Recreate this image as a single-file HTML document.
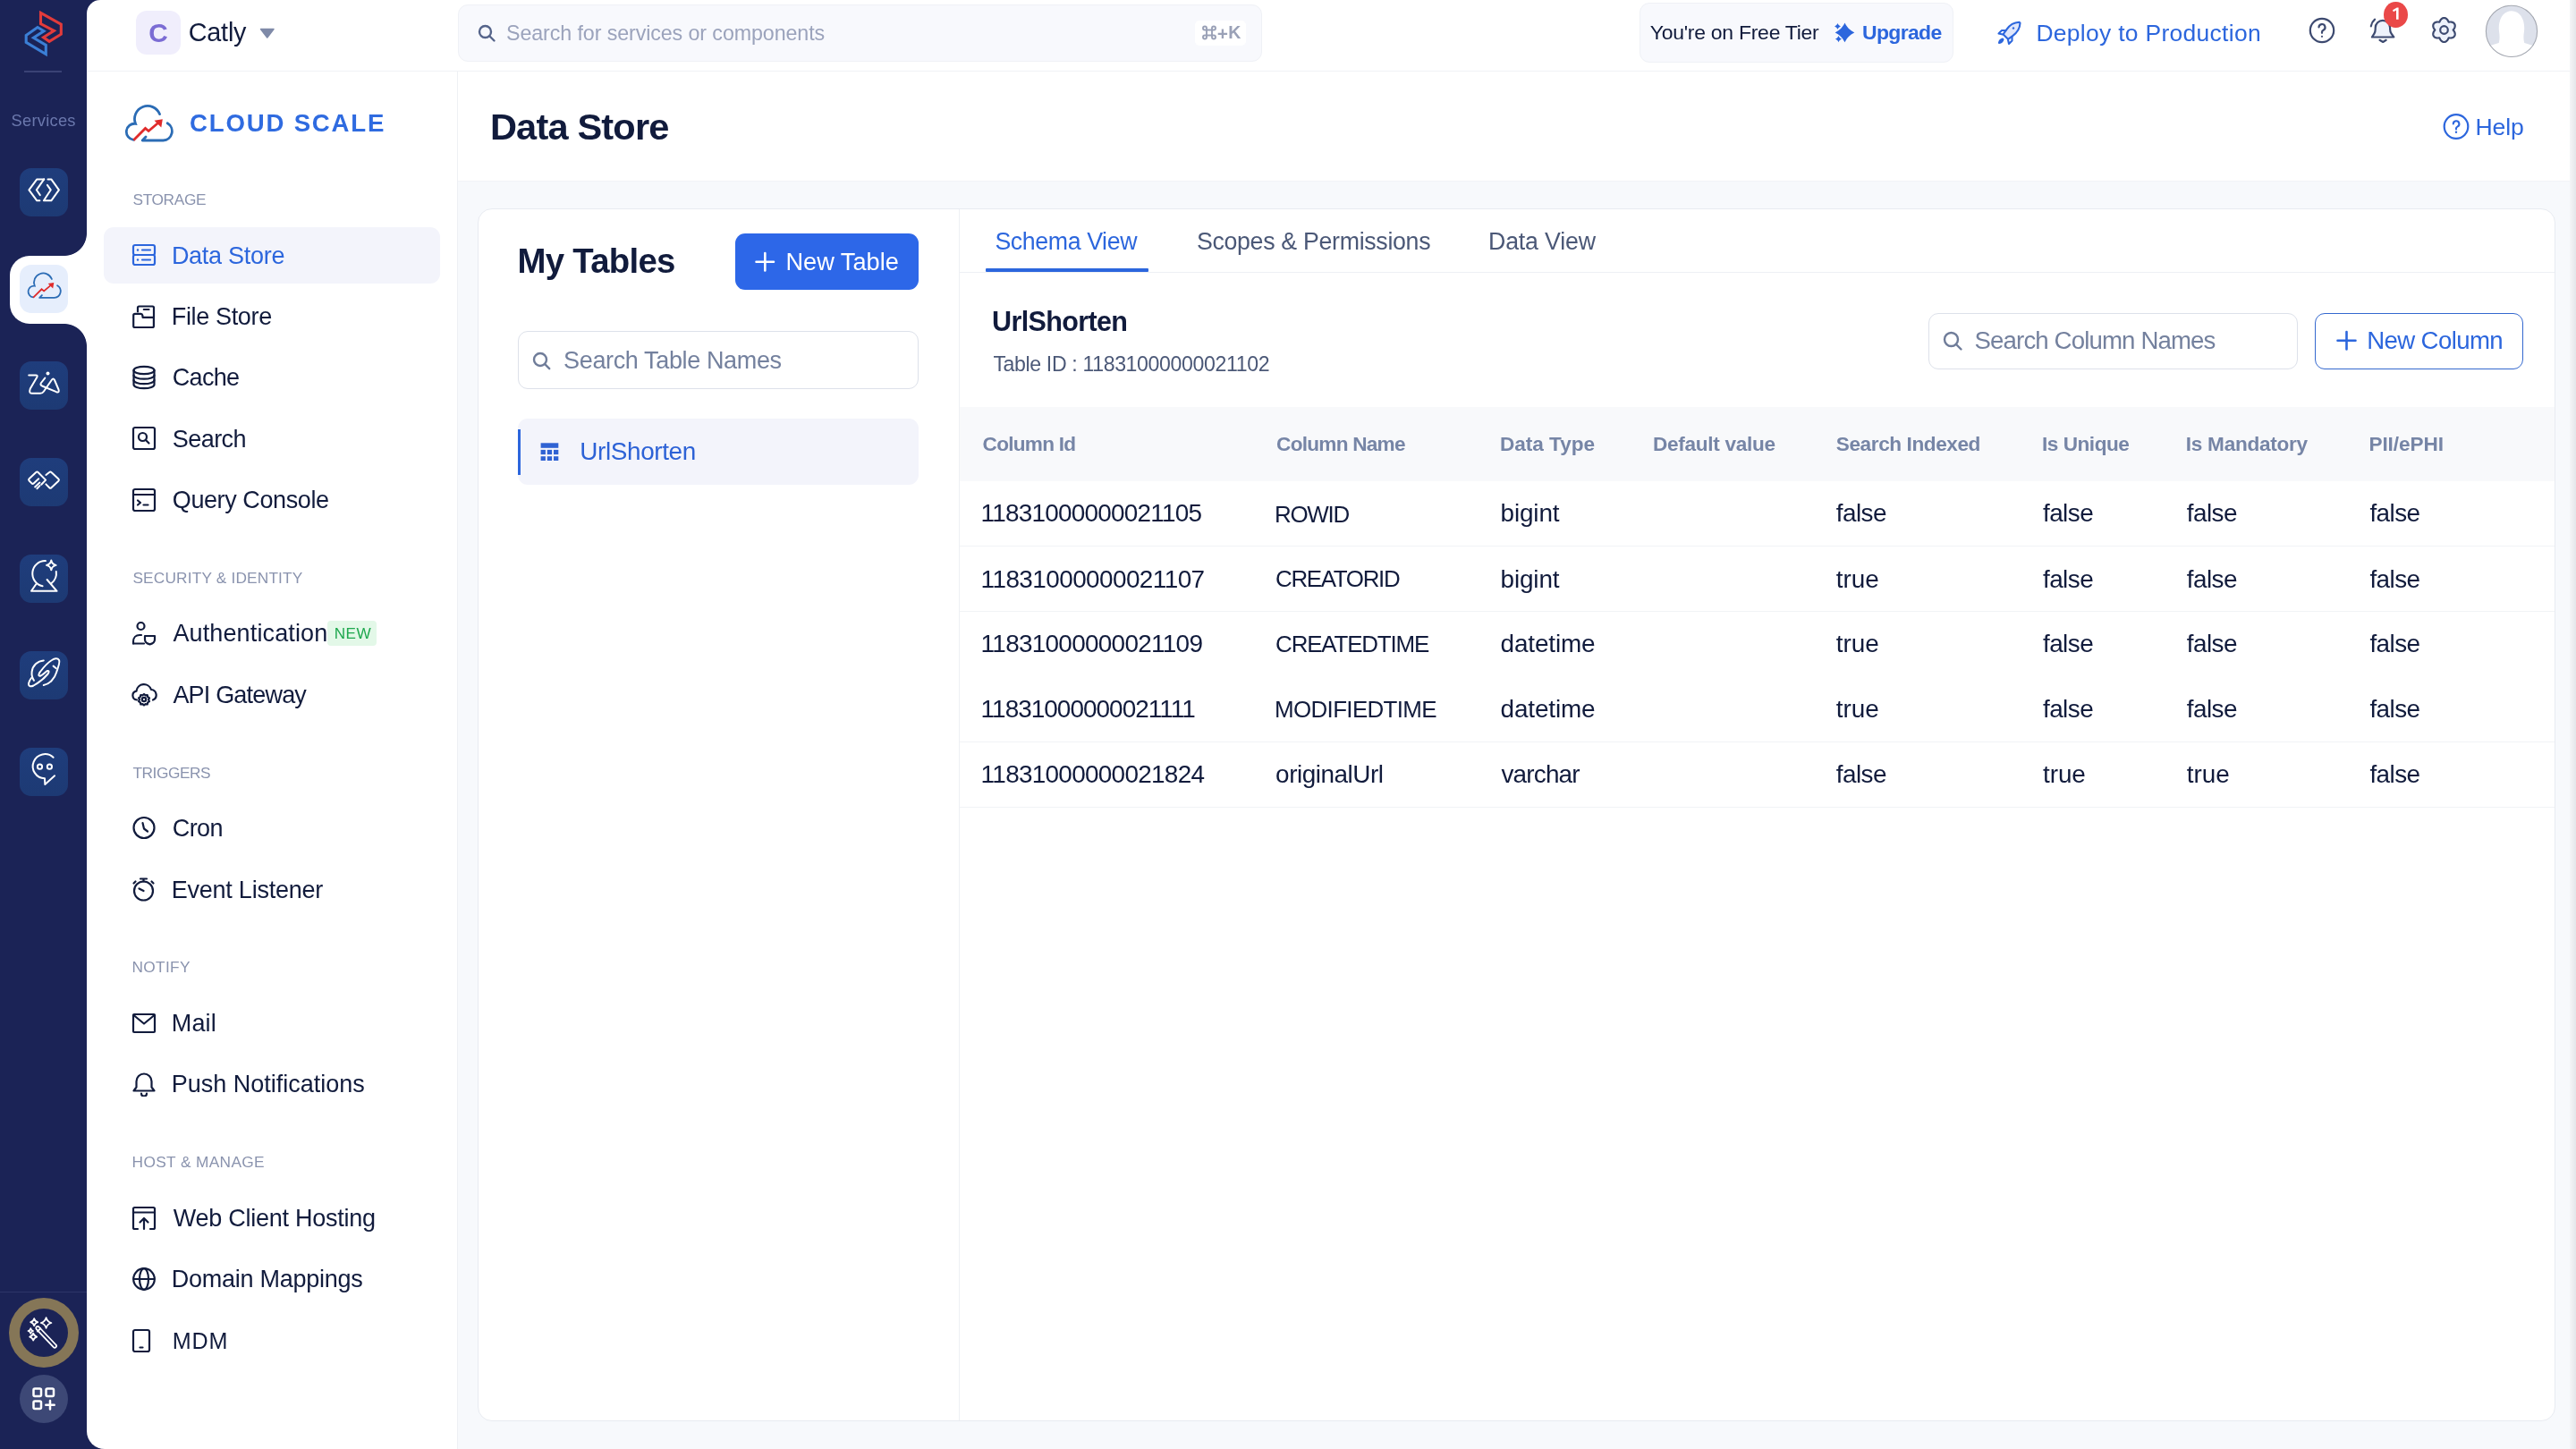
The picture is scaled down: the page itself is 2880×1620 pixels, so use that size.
<!DOCTYPE html><html><head><meta charset='utf-8'><style>
*{margin:0;padding:0;box-sizing:border-box}
html,body{width:2880px;height:1620px;overflow:hidden}
body{background:#1b2356;position:relative;font-family:"Liberation Sans",sans-serif}
.a{position:absolute}
.t{position:absolute;white-space:nowrap;font-family:"Liberation Sans",sans-serif}
@media (max-width:1600px){html{zoom:0.5}}
</style></head><body>
<div class='a' style='left:97px;top:0px;width:2783px;height:1620px;background:#fff;border-radius:15px 0 0 20px'></div>
<div class='a' style='left:11px;top:286px;width:120px;height:76px;background:#fff;border-radius:22px 0 0 22px'></div>
<div class='a' style='left:72px;top:261px;width:25px;height:25px;background:radial-gradient(circle at 0 0, #1b2356 24.5px, #fff 25.3px);'></div>
<div class='a' style='left:72px;top:362px;width:25px;height:25px;background:radial-gradient(circle at 0 100%, #1b2356 24.5px, #fff 25.3px);'></div>
<div class='a' style='left:97px;top:79px;width:2783px;height:1px;background:#f0f2f6'></div>
<div class='a' style='left:511px;top:80px;width:1px;height:1540px;background:#eef0f4'></div>
<div class='a' style='left:512px;top:203px;width:2368px;height:1417px;background:#f7f9fc'></div>
<div class='a' style='left:512px;top:202px;width:2368px;height:1px;background:#f2f4f7'></div>
<div class='a' style='left:2873px;top:0px;width:7px;height:1620px;background:linear-gradient(90deg,#f4f5f7,#e4e6ea)'></div>
<div class='a' style='left:534px;top:233px;width:2323px;height:1356px;background:#fff;border:1px solid #e8ebf1;border-radius:16px'></div>
<div class='a' style='left:1072px;top:234px;width:1px;height:1354px;background:#eef0f4'></div>
<div class='a' style='left:1073px;top:304px;width:1783px;height:1px;background:#eef0f4'></div>
<div class='a' style='left:1102.4px;top:300px;width:181.4px;height:4.2px;background:#2c66dd;border-radius:1px'></div>
<div class='a' style='left:1073px;top:455px;width:1783px;height:83px;background:#f8f9fb'></div>
<div class='a' style='left:1073px;top:610px;width:1783px;height:1px;background:#f1f3f6'></div>
<div class='a' style='left:1073px;top:683px;width:1783px;height:1px;background:#f1f3f6'></div>
<div class='a' style='left:1073px;top:829px;width:1783px;height:1px;background:#f1f3f6'></div>
<div class='a' style='left:1073px;top:901.5px;width:1783px;height:1px;background:#f1f3f6'></div>
<div class='a' style='left:27px;top:79px;width:42px;height:1.5px;background:#3a4275'></div>
<div class='a' style='left:0px;top:1444px;width:97px;height:1.2px;background:#2d3568'></div>
<div class='a' style='left:151.6px;top:11.6px;width:50.5px;height:49.7px;background:#f0eefc;border-radius:12px'></div>
<div class='a' style='left:512px;top:4.5px;width:899px;height:64px;background:#f8f9fd;border:1px solid #eff1f6;border-radius:11px'></div>
<div class='a' style='left:1336px;top:22.6px;width:57px;height:28.7px;background:#fff;border-radius:5px'></div>
<div class='a' style='left:1832.5px;top:3.4px;width:351px;height:67px;background:#f8f9fd;border:1px solid #eff1f6;border-radius:11px'></div>
<div class='a' style='left:116px;top:254px;width:376px;height:63px;background:#f3f4fb;border-radius:11px'></div>
<div class='a' style='left:365.8px;top:694.4px;width:55.7px;height:28px;background:#e3f8e8;border-radius:4px'></div>
<div class='a' style='left:821.8px;top:261.2px;width:205px;height:63.3px;background:#2d67e8;border-radius:11px'></div>
<div class='a' style='left:579.2px;top:370px;width:448px;height:64.8px;background:#fff;border:1.5px solid #dde1ea;border-radius:11px'></div>
<div class='a' style='left:579px;top:467.7px;width:448px;height:74.8px;background:#f3f4fb;border-radius:11px'></div>
<div class='a' style='left:579px;top:479.5px;width:3px;height:51px;background:#2c66dd'></div>
<div class='a' style='left:2156.3px;top:349.5px;width:413px;height:63.1px;background:#fff;border:1.5px solid #dde1ea;border-radius:11px'></div>
<div class='a' style='left:2588.4px;top:349.5px;width:232.3px;height:63.1px;background:#fff;border:1.6px solid #3468cf;border-radius:11px'></div>
<svg class='a' style='left:20px;top:8px;' width='56' height='60' viewBox='0 0 56 60' fill='none'><path d='M25.5 6.3L48.3 19.2V30.2L35.1 38.3 28.6 33.8 40.4 26.3 25.5 18.5z' stroke='#e23b3b' stroke-width='3.1' stroke-linejoin='miter' fill='none'/><path d='M22 22.5L29 26.8 17.5 34.3 31.3 42.5V52.5L9.2 39.3V31.5z' stroke='#3b7fd6' stroke-width='3.1' stroke-linejoin='miter' fill='none'/></svg>
<div class='a' style='left:22px;top:188px;width:54px;height:54px;background:linear-gradient(180deg,#1f3d7c,#1d3a74);border-radius:13px'></div>
<div class='a' style='left:22px;top:296px;width:54px;height:54px;background:#e6eefc;border-radius:13px'></div>
<div class='a' style='left:22px;top:404px;width:54px;height:54px;background:linear-gradient(180deg,#1f3d7c,#1d3a74);border-radius:13px'></div>
<div class='a' style='left:22px;top:512px;width:54px;height:54px;background:linear-gradient(180deg,#1f3d7c,#1d3a74);border-radius:13px'></div>
<div class='a' style='left:22px;top:620px;width:54px;height:54px;background:linear-gradient(180deg,#1f3d7c,#1d3a74);border-radius:13px'></div>
<div class='a' style='left:22px;top:728px;width:54px;height:54px;background:linear-gradient(180deg,#1f3d7c,#1d3a74);border-radius:13px'></div>
<div class='a' style='left:22px;top:836px;width:54px;height:54px;background:linear-gradient(180deg,#1f3d7c,#1d3a74);border-radius:13px'></div>
<svg class='a' style='left:22px;top:188px;' width='54' height='54' viewBox='0 0 54 54' fill='none'><path d='M27.2 12.4H19.3L10.4 24.3 19.3 36.3H22.4' stroke='#ffffff' stroke-width='2' stroke-linecap='round' stroke-linejoin='round' stroke-width='2.3' stroke-linecap='butt'/><path d='M27.2 12.4L18.8 24.3 22.8 30.1' stroke='#ffffff' stroke-width='2' stroke-linecap='round' stroke-linejoin='round' stroke-width='2.3' stroke-linecap='butt'/><path d='M31.5 12.4H35.3L43.9 24.3 35.3 36.3H26.9L34.8 24.3 30.9 18.8' stroke='#ffffff' stroke-width='2' stroke-linecap='round' stroke-linejoin='round' stroke-width='2.3' stroke-linecap='butt'/></svg>
<svg class='a' style='left:22px;top:296px;' width='54' height='54' viewBox='0 0 54 54' fill='none'><g transform='translate(9.3 9.9) scale(0.71)'><path d='M8.3 37.3A9 9 0 0 1 10.5 19.3A14.3 14.3 0 0 1 37.5 8.6' stroke='#2b6cb5' stroke-width='2.5' stroke-linecap='round' fill='none'/><path d='M46.2 18.8A10.3 10.3 0 0 1 41.5 38H18.2L22 34' stroke='#2b6cb5' stroke-width='2.5' stroke-linecap='round' stroke-linejoin='round' fill='none'/><path d='M8.3 37.7L21.5 24.5L25.1 27.5L36 18.3' stroke='#e02b2b' stroke-width='2.5' fill='none'/><path d='M31.5 15.8L40.8 14.2L39.3 23.5z' fill='#e02b2b'/></g></svg>
<svg class='a' style='left:22px;top:404px;' width='54' height='54' viewBox='0 0 54 54' fill='none'><path d='M10.2 15.5H18Q20.5 15.5 19.3 17.7L11.8 30.5Q10 35.8 13.5 35.8H23Q25.5 35.8 27 33.5L36 20.5Q37.5 18.3 38.8 20.5L43.5 31.5Q44.8 35.3 41 34.2L25 27.5Q22.5 26 24 24L28.3 18.6' stroke='#ffffff' stroke-width='2' stroke-linecap='round' stroke-linejoin='round' stroke-width='2.2'/><circle cx='31.5' cy='13.6' r='2' fill='#fff'/></svg>
<svg class='a' style='left:22px;top:512px;' width='54' height='54' viewBox='0 0 54 54' fill='none'><path d='M24.2 29.8L29.1 24.6L20.5 16Q19.4 14.9 18.3 16L10.6 23.3Q9.5 24.4 10.6 25.5L13.5 28.4Q14.6 29.3 15.6 28.4L21.2 23.3' stroke='#ffffff' stroke-width='2' stroke-linecap='round' stroke-linejoin='round' stroke-width='2.2'/><path d='M22.4 27.6L17.1 32.4M22.4 31.1L19.4 34.3' stroke='#ffffff' stroke-width='2' stroke-linecap='round' stroke-linejoin='round' stroke-width='2.2'/><path d='M29.4 19L33.2 16Q34.3 14.9 35.4 16L43.4 23.5Q44.5 24.6 43.4 25.7L35.4 33.2Q34.3 34.3 33.2 33.2L29.4 29.4' stroke='#ffffff' stroke-width='2' stroke-linecap='round' stroke-linejoin='round' stroke-width='2.2'/></svg>
<svg class='a' style='left:22px;top:620px;' width='54' height='54' viewBox='0 0 54 54' fill='none'><path d='M28.9 7.1A14.2 14.2 0 0 0 25.6 35.2' stroke='#ffffff' stroke-width='2' stroke-linecap='round' stroke-linejoin='round'/><path d='M40.8 19A14.2 14.2 0 0 1 35.6 32' stroke='#ffffff' stroke-width='2' stroke-linecap='round' stroke-linejoin='round'/><path d='M30.6 28L41.6 40.8H13L18.4 33' stroke='#ffffff' stroke-width='2' stroke-linecap='round' stroke-linejoin='round'/><path d='M35.3 6.5c.6 3.3 1.9 4.6 5.3 5.4-3.4.8-4.7 2.1-5.3 5.4-.6-3.3-1.9-4.6-5.3-5.4 3.4-.8 4.7-2.1 5.3-5.4z' stroke='#ffffff' stroke-width='2' stroke-linecap='round' stroke-linejoin='round' stroke-width='2.2'/></svg>
<svg class='a' style='left:22px;top:728px;' width='54' height='54' viewBox='0 0 54 54' fill='none'><path d='M26.8 38C33 37 39 31 41 24C42.5 19 45.5 13 44 10C42.5 7.5 39 8 36 10C31 13 26 19 23 23C20.5 26 21 28.5 23.5 27.5C26 26.5 29.5 22.5 31 22C33 21.5 33 23.5 31.5 25.5C27 31 20 36 15.5 38.5C12.5 40 10 39.5 10 37C10 35 11.5 32 13 30' stroke='#ffffff' stroke-width='2' stroke-linecap='round' stroke-linejoin='round' stroke-width='2.1'/><path d='M26.8 10.4C20 11 14.5 16 13.6 23C13.2 27 14 30 16 32.8' stroke='#ffffff' stroke-width='2' stroke-linecap='round' stroke-linejoin='round' stroke-width='2.1'/><path d='M37.6 16.6L40.8 19.2' stroke='#ffffff' stroke-width='2' stroke-linecap='round' stroke-linejoin='round' stroke-width='2.1'/></svg>
<svg class='a' style='left:22px;top:836px;' width='54' height='54' viewBox='0 0 54 54' fill='none'><path d='M37.6 10.8A13.6 13.6 0 1 0 28 34.3L28.3 41L39.1 31.3' stroke='#ffffff' stroke-width='2' stroke-linecap='round' stroke-linejoin='round' stroke-width='2.2' stroke-linejoin='miter'/><circle cx='22.5' cy='21.2' r='2.6' stroke='#ffffff' stroke-width='2' stroke-linecap='round' stroke-linejoin='round' stroke-width='2'/><circle cx='33.4' cy='21.2' r='2.6' stroke='#ffffff' stroke-width='2' stroke-linecap='round' stroke-linejoin='round' stroke-width='2'/></svg>
<svg class='a' style='left:138px;top:116px;' width='56' height='46' viewBox='0 0 56 46' fill='none'><g transform='translate(3 3) scale(1.0)'><path d='M8.3 37.3A9 9 0 0 1 10.5 19.3A14.3 14.3 0 0 1 37.5 8.6' stroke='#2b6cb5' stroke-width='2.8' stroke-linecap='round' fill='none'/><path d='M46.2 18.8A10.3 10.3 0 0 1 41.5 38H18.2L22 34' stroke='#2b6cb5' stroke-width='2.8' stroke-linecap='round' stroke-linejoin='round' fill='none'/><path d='M8.3 37.7L21.5 24.5L25.1 27.5L36 18.3' stroke='#e02b2b' stroke-width='2.8' fill='none'/><path d='M31.5 15.8L40.8 14.2L39.3 23.5z' fill='#e02b2b'/></g></svg>
<svg class='a' style='left:147px;top:272px;' width='28' height='27' viewBox='0 0 28 27' fill='none'><rect x='2' y='2' width='24' height='11' rx='2' stroke='#2c66dd' stroke-width='2.2' stroke-linecap='round' stroke-linejoin='round'/><rect x='2' y='13' width='24' height='11' rx='2' stroke='#2c66dd' stroke-width='2.2' stroke-linecap='round' stroke-linejoin='round'/><circle cx='7' cy='7.5' r='1.2' fill='#2c66dd'/><circle cx='7' cy='18.5' r='1.2' fill='#2c66dd'/><path d='M12 7.5H21M12 18.5H21' stroke='#2c66dd' stroke-width='2.2' stroke-linecap='round' stroke-linejoin='round'/></svg>
<svg class='a' style='left:147px;top:341px;' width='28' height='27' viewBox='0 0 28 27' fill='none'><path d='M7 7.5V3Q7 1.5 8.5 1.5H23.5Q25 1.5 25 3V13.5M13.8 5H19.5' stroke='#111b3c' stroke-width='2.2' stroke-linecap='round' stroke-linejoin='round'/><path d='M2.2 11.5Q2.2 9.8 4 9.8H10.5Q12 9.8 12.3 11.5L12.6 13.8H24.9V23.5Q24.9 25 23.4 25H3.7Q2.2 25 2.2 23.5Z' stroke='#111b3c' stroke-width='2.2' stroke-linecap='round' stroke-linejoin='round'/></svg>
<svg class='a' style='left:147px;top:408px;' width='28' height='28' viewBox='0 0 28 28' fill='none'><ellipse cx='14' cy='6' rx='11.5' ry='4.2' stroke='#111b3c' stroke-width='2.2' stroke-linecap='round' stroke-linejoin='round'/><path d='M2.5 6v16c0 2.3 5.1 4.2 11.5 4.2s11.5-1.9 11.5-4.2V6' stroke='#111b3c' stroke-width='2.2' stroke-linecap='round' stroke-linejoin='round'/><path d='M2.5 11.5c0 2.3 5.1 4.2 11.5 4.2s11.5-1.9 11.5-4.2M2.5 17c0 2.3 5.1 4.2 11.5 4.2s11.5-1.9 11.5-4.2' stroke='#111b3c' stroke-width='2.2' stroke-linecap='round' stroke-linejoin='round'/></svg>
<svg class='a' style='left:147px;top:476px;' width='28' height='28' viewBox='0 0 28 28' fill='none'><rect x='2' y='2' width='24' height='24' rx='2' stroke='#111b3c' stroke-width='2.2' stroke-linecap='round' stroke-linejoin='round'/><circle cx='12.5' cy='12.5' r='4.5' stroke='#111b3c' stroke-width='2.2' stroke-linecap='round' stroke-linejoin='round'/><path d='M16 16l3.5 3.5' stroke='#111b3c' stroke-width='2.2' stroke-linecap='round' stroke-linejoin='round'/></svg>
<svg class='a' style='left:147px;top:545px;' width='28' height='28' viewBox='0 0 28 28' fill='none'><rect x='2' y='2' width='24' height='24' rx='2' stroke='#111b3c' stroke-width='2.2' stroke-linecap='round' stroke-linejoin='round'/><path d='M2 8h24' stroke='#111b3c' stroke-width='2.2' stroke-linecap='round' stroke-linejoin='round'/><path d='M7 14.5l3 2.5-3 2.5M13.5 19.5h5' stroke='#111b3c' stroke-width='2.2' stroke-linecap='round' stroke-linejoin='round'/></svg>
<svg class='a' style='left:147px;top:694px;' width='29' height='28' viewBox='0 0 29 28' fill='none'><circle cx='10.5' cy='6' r='4' stroke='#111b3c' stroke-width='2.2' stroke-linecap='round' stroke-linejoin='round'/><path d='M2 25.5v-2c0-4.5 3-7.5 7-7.5h2' stroke='#111b3c' stroke-width='2.2' stroke-linecap='round' stroke-linejoin='round'/><path d='M2 25.5h12' stroke='#111b3c' stroke-width='2.2' stroke-linecap='round' stroke-linejoin='round'/><path d='M15 17h11v4c0 2.8-2.4 4.6-5.5 5.4-3.1-.8-5.5-2.6-5.5-5.4z' stroke='#111b3c' stroke-width='2.2' stroke-linecap='round' stroke-linejoin='round'/></svg>
<svg class='a' style='left:147px;top:763px;' width='29' height='28' viewBox='0 0 29 28' fill='none'><path d='M6 19.5a5 5 0 0 1-0.5-9.9A8.5 8.5 0 0 1 22 8a6 6 0 0 1 2 11.5' stroke='#111b3c' stroke-width='2.2' stroke-linecap='round' stroke-linejoin='round'/><circle cx='14' cy='19' r='2.2' stroke='#111b3c' stroke-width='2.2' stroke-linecap='round' stroke-linejoin='round'/><path d='M14 13l1.6 1.4 2.1-.3.5 2.1 1.8 1.2-1 1.9 1 1.9-1.8 1.2-.5 2.1-2.1-.3L14 25.5l-1.6-1.4-2.1.3-.5-2.1-1.8-1.2 1-1.9-1-1.9 1.8-1.2.5-2.1 2.1.3z' stroke='#111b3c' stroke-width='2.2' stroke-linecap='round' stroke-linejoin='round'/></svg>
<svg class='a' style='left:147px;top:912px;' width='28' height='27' viewBox='0 0 28 27' fill='none'><circle cx='14' cy='13.5' r='11.5' stroke='#111b3c' stroke-width='2.2' stroke-linecap='round' stroke-linejoin='round'/><path d='M12.5 8l1.5 6.5 4 3' stroke='#111b3c' stroke-width='2.2' stroke-linecap='round' stroke-linejoin='round'/></svg>
<svg class='a' style='left:147px;top:980px;' width='28' height='29' viewBox='0 0 28 29' fill='none'><circle cx='13.5' cy='16' r='10.5' stroke='#111b3c' stroke-width='2.2' stroke-linecap='round' stroke-linejoin='round'/><path d='M10 2.5h7M13.5 2.5v3' stroke='#111b3c' stroke-width='2.2' stroke-linecap='round' stroke-linejoin='round'/><path d='M2.5 7.5l2-2M24.5 7.5l-2-2' stroke='#111b3c' stroke-width='2.2' stroke-linecap='round' stroke-linejoin='round'/><path d='M13.5 16l-5-2.5' stroke='#111b3c' stroke-width='2.2' stroke-linecap='round' stroke-linejoin='round'/></svg>
<svg class='a' style='left:147px;top:1132px;' width='28' height='24' viewBox='0 0 28 24' fill='none'><rect x='2' y='2' width='24' height='20' rx='1' stroke='#111b3c' stroke-width='2.2' stroke-linecap='round' stroke-linejoin='round'/><path d='M2.5 3l11.5 9.5L25.5 3' stroke='#111b3c' stroke-width='2.2' stroke-linecap='round' stroke-linejoin='round'/></svg>
<svg class='a' style='left:147px;top:1198px;' width='28' height='28' viewBox='0 0 28 28' fill='none'><path d='M2.5 21.5h23l-3-4V11a8.5 8.5 0 0 0-17 0v6.5z' stroke='#111b3c' stroke-width='2.2' stroke-linecap='round' stroke-linejoin='round'/><path d='M11 24.5a3 3 0 0 0 6 0' stroke='#111b3c' stroke-width='2.2' stroke-linecap='round' stroke-linejoin='round'/></svg>
<svg class='a' style='left:147px;top:1348px;' width='28' height='28' viewBox='0 0 28 28' fill='none'><path d='M7 26H3.5a1.5 1.5 0 0 1-1.5-1.5v-21A1.5 1.5 0 0 1 3.5 2h21A1.5 1.5 0 0 1 26 3.5v21a1.5 1.5 0 0 1-1.5 1.5H21' stroke='#111b3c' stroke-width='2.2' stroke-linecap='round' stroke-linejoin='round'/><path d='M2 7.5h24' stroke='#111b3c' stroke-width='2.2' stroke-linecap='round' stroke-linejoin='round'/><path d='M14 26V14.5M9.5 18.5l4.5-4.5 4.5 4.5' stroke='#111b3c' stroke-width='2.2' stroke-linecap='round' stroke-linejoin='round'/></svg>
<svg class='a' style='left:147px;top:1416px;' width='28' height='28' viewBox='0 0 28 28' fill='none'><circle cx='14' cy='14' r='11.8' stroke='#111b3c' stroke-width='2.2' stroke-linecap='round' stroke-linejoin='round'/><ellipse cx='14' cy='14' rx='5' ry='11.8' stroke='#111b3c' stroke-width='2.2' stroke-linecap='round' stroke-linejoin='round'/><path d='M2.5 14h23' stroke='#111b3c' stroke-width='2.2' stroke-linecap='round' stroke-linejoin='round'/></svg>
<svg class='a' style='left:147px;top:1485px;' width='23' height='28' viewBox='0 0 23 28' fill='none'><rect x='2' y='2' width='18' height='24' rx='2' stroke='#111b3c' stroke-width='2.2' stroke-linecap='round' stroke-linejoin='round'/><path d='M9.5 21.5h3' stroke='#111b3c' stroke-width='2.2' stroke-linecap='round' stroke-linejoin='round'/></svg>
<svg class='a' style='left:533px;top:26px;' width='22' height='22' viewBox='0 0 22 22' fill='none'><circle cx='9.5' cy='9.5' r='6.5' stroke='#55648a' stroke-width='2.4'/><path d='M14.5 14.5l5 5' stroke='#55648a' stroke-width='2.4' stroke-linecap='round'/></svg>
<svg class='a' style='left:289px;top:30px;' width='20' height='14' viewBox='0 0 20 14' fill='none'><path d='M2.5 2.5h14.5l-7.25 9.5z' fill='#7f8aa8' stroke='#7f8aa8' stroke-width='1.5' stroke-linejoin='round'/></svg>
<svg class='a' style='left:1343px;top:27px;' width='18' height='18' viewBox='0 0 18 18' fill='none'><path d='M6 6.5h6v6H6zM6 6.5V4.5a2 2 0 1 0-2 2h2M12 6.5V4.5a2 2 0 1 1 2 2h-2M6 12.5v2a2 2 0 1 1-2-2h2M12 12.5v2a2 2 0 1 0 2-2h-2' stroke='#9aa1b7' stroke-width='1.9'/></svg>
<svg class='a' style='left:1360px;top:31px;' width='14' height='14' viewBox='0 0 14 14' fill='none'><path d='M6.9 1.5v10.5M1.7 6.8h10.4' stroke='#9aa1b7' stroke-width='2.3'/></svg>
<svg class='a' style='left:2050px;top:24px;' width='26' height='26' viewBox='0 0 26 26' fill='none'><path d='M12.5 1.5999999999999996C15.2216 6.9568 17.9432 9.6784 23.3 12.4C17.9432 15.1216 15.2216 17.8432 12.5 23.200000000000003C9.7784 17.8432 7.0568 15.1216 1.6999999999999993 12.4C7.0568 9.6784 9.7784 6.9568 12.5 1.5999999999999996z' fill='#2c66dd'/><path d='M4.5 2.0000000000000004C5.316 3.7680000000000002 6.132 4.5840000000000005 7.9 5.4C6.132 6.216 5.316 7.032 4.5 8.8C3.684 7.032 2.868 6.216 1.1 5.4C2.868 4.5840000000000005 3.684 3.7680000000000002 4.5 2.0000000000000004z' fill='#2c66dd'/><path d='M5.5 16.0C6.364 17.872 7.228 18.736 9.1 19.6C7.228 20.464000000000002 6.364 21.328000000000003 5.5 23.200000000000003C4.636 21.328000000000003 3.772 20.464000000000002 1.9 19.6C3.772 18.736 4.636 17.872 5.5 16.0z' fill='#2c66dd'/></svg>
<svg class='a' style='left:2232px;top:23px;' width='29' height='28' viewBox='0 0 29 28' fill='none'><path d='M25.5 1.8c-6 .3-10.5 3-14 8l-4 5.5 5.5 5.5 5.5-4c5-3.5 7.7-8 8-14z' fill='#dfe6fb' stroke='#2c66dd' stroke-width='2.1' stroke-linecap='round' stroke-linejoin='round'/><path d='M10.5 11H6l-3.5 3.5 4.5 1M17.5 18v4.5l-3.5 3.5-1-4.5' stroke='#2c66dd' stroke-width='2.1' stroke-linecap='round' stroke-linejoin='round'/><path d='M7 20.5c-2 .5-3.5 2-4 4.5 2.5-.5 4-2 4.5-4' stroke='#2c66dd' stroke-width='2.1' stroke-linecap='round' stroke-linejoin='round'/><circle cx='19' cy='8.5' r='1.2' fill='#2c66dd'/></svg>
<svg class='a' style='left:2580px;top:18px;' width='32' height='32' viewBox='0 0 32 32' fill='none'><circle cx='16' cy='16' r='13.2' stroke='#3d4a70' stroke-width='2.2' stroke-linecap='round' stroke-linejoin='round'/><path d='M12.5 12.5a3.5 3.5 0 1 1 5 3.2c-1 .5-1.5 1.3-1.5 2.3v.8' stroke='#3d4a70' stroke-width='2.2' stroke-linecap='round' stroke-linejoin='round'/><circle cx='16' cy='22.8' r='1.1' fill='#3d4a70'/></svg>
<svg class='a' style='left:2649px;top:19px;' width='30' height='30' viewBox='0 0 30 30' fill='none'><path d='M2.9 22.5H27.3L24.6 18.6Q23.1 16.5 23.1 13.6V12A8.2 8.2 0 0 0 6.7 12V13.6Q6.7 16.5 5.4 18.6Z' fill='#eef2fb' stroke='#3d4a70' stroke-width='2.2' stroke-linecap='round' stroke-linejoin='round'/><path d='M11.5 25.8L15.2 28L18.7 25.8' stroke='#3d4a70' stroke-width='2.2' stroke-linecap='round' stroke-linejoin='round'/><path d='M1.8 10.3Q2.8 5.5 6.1 2.7' stroke='#3d4a70' stroke-width='2.2' stroke-linecap='round' stroke-linejoin='round'/></svg>
<div class='a' style='left:2665.1px;top:2.3px;width:26.7px;height:28.3px;background:#ea4848;border-radius:50%'></div>
<svg class='a' style='left:2672px;top:6px;' width='12' height='18' viewBox='0 0 12 18' fill='none'><path d='M3 5.2L7.8 2.4H9.6V15.7H7V5.5L3.9 7.3z' fill='#fff'/></svg>
<svg class='a' style='left:2717px;top:17.6px;' width='31' height='31' viewBox='0 0 31 31' fill='none'><path d='M25.70 15.50 L26.11 14.94 L26.55 14.34 L26.94 13.69 L27.28 13.00 L27.53 12.28 L27.69 11.54 L27.74 10.80 L27.67 10.08 L27.49 9.39 L27.19 8.75 L26.78 8.17 L26.28 7.67 L25.69 7.25 L25.02 6.93 L24.31 6.69 L23.56 6.55 L22.79 6.50 L22.03 6.51 L21.29 6.59 L20.60 6.67 L20.33 6.03 L20.02 5.35 L19.65 4.69 L19.22 4.05 L18.72 3.47 L18.16 2.97 L17.55 2.55 L16.89 2.25 L16.20 2.06 L15.50 2.00 L14.80 2.06 L14.11 2.25 L13.45 2.55 L12.84 2.97 L12.28 3.47 L11.78 4.05 L11.35 4.69 L10.98 5.35 L10.67 6.03 L10.40 6.67 L9.71 6.59 L8.97 6.51 L8.21 6.50 L7.44 6.55 L6.69 6.69 L5.98 6.93 L5.31 7.25 L4.72 7.67 L4.22 8.17 L3.81 8.75 L3.51 9.39 L3.33 10.08 L3.26 10.80 L3.31 11.54 L3.47 12.28 L3.72 13.00 L4.06 13.69 L4.45 14.34 L4.89 14.94 L5.30 15.50 L4.89 16.06 L4.45 16.66 L4.06 17.31 L3.72 18.00 L3.47 18.72 L3.31 19.46 L3.26 20.20 L3.33 20.92 L3.51 21.61 L3.81 22.25 L4.22 22.83 L4.72 23.33 L5.31 23.75 L5.98 24.07 L6.69 24.31 L7.44 24.45 L8.21 24.50 L8.97 24.49 L9.71 24.41 L10.40 24.33 L10.67 24.97 L10.98 25.65 L11.35 26.31 L11.78 26.95 L12.28 27.53 L12.84 28.03 L13.45 28.45 L14.11 28.75 L14.80 28.94 L15.50 29.00 L16.20 28.94 L16.89 28.75 L17.55 28.45 L18.16 28.03 L18.72 27.53 L19.22 26.95 L19.65 26.31 L20.02 25.65 L20.33 24.97 L20.60 24.33 L21.29 24.41 L22.03 24.49 L22.79 24.50 L23.56 24.45 L24.31 24.31 L25.02 24.07 L25.69 23.75 L26.28 23.33 L26.78 22.83 L27.19 22.25 L27.49 21.61 L27.67 20.92 L27.74 20.20 L27.69 19.46 L27.53 18.72 L27.28 18.00 L26.94 17.31 L26.55 16.66 L26.11 16.06z' fill='#eef2fb' stroke='#3d4a70' stroke-width='2.2' stroke-linecap='round' stroke-linejoin='round'/><circle cx='15.5' cy='15.5' r='4.3' stroke='#3d4a70' stroke-width='2.2' stroke-linecap='round' stroke-linejoin='round'/></svg>
<svg class='a' style='left:2778px;top:5px;' width='60' height='60' viewBox='0 0 60 60' fill='none'><defs><clipPath id='av'><circle cx='30' cy='29.9' r='28.6'/></clipPath></defs><circle cx='30' cy='29.9' r='28.6' fill='#dde1eb'/><g clip-path='url(#av)'><path d='M15.7 43C16.5 40 17 37 16 30C14.5 18 20 7.2 30 7.2C40 7.2 45.5 18 44 30C43 37 43.5 40 44.3 43C50 45 55 46 58 48L58 62L2 62L2 48C5 46 10 45 15.7 43Z' fill='#fff'/></g><circle cx='30' cy='29.9' r='28.6' stroke='#a3a7b0' stroke-width='1.1'/></svg>
<svg class='a' style='left:594px;top:392px;' width='24' height='24' viewBox='0 0 24 24' fill='none'><circle cx='10' cy='10' r='7' stroke='#6f7c99' stroke-width='2.4' stroke-linecap='round'/><path d='M15.2 15.2l5 5' stroke='#6f7c99' stroke-width='2.4' stroke-linecap='round'/></svg>
<svg class='a' style='left:2171px;top:369px;' width='25' height='25' viewBox='0 0 25 25' fill='none'><circle cx='10.5' cy='10.5' r='7.5' stroke='#6f7c99' stroke-width='2.4' stroke-linecap='round'/><path d='M16 16l5.5 5.5' stroke='#6f7c99' stroke-width='2.4' stroke-linecap='round'/></svg>
<svg class='a' style='left:843px;top:280px;' width='25' height='25' viewBox='0 0 25 25' fill='none'><path d='M12.3 3v19.5M2.5 12.8H22' stroke='#fff' stroke-width='2.6' stroke-linecap='round'/></svg>
<svg class='a' style='left:2611px;top:368px;' width='25' height='25' viewBox='0 0 25 25' fill='none'><path d='M12.5 3v19.5M2.5 12.8H22.5' stroke='#2c66dd' stroke-width='2.6' stroke-linecap='round'/></svg>
<svg class='a' style='left:603.5px;top:495px;' width='21' height='21' viewBox='0 0 21 21' fill='none'><rect x='0.6' y='0.3' width='19.7' height='5.5' fill='#2f62d3'/><rect x='0.6' y='7.9' width='5.3' height='5.2' fill='#2f62d3'/><rect x='7.8' y='7.9' width='5.3' height='5.2' fill='#2f62d3'/><rect x='15.0' y='7.9' width='5.3' height='5.2' fill='#2f62d3'/><rect x='0.6' y='15.2' width='5.3' height='4.8' fill='#2f62d3'/><rect x='7.8' y='15.2' width='5.3' height='4.8' fill='#2f62d3'/><rect x='15.0' y='15.2' width='5.3' height='4.8' fill='#2f62d3'/></svg>
<svg class='a' style='left:2730px;top:126px;' width='32' height='32' viewBox='0 0 32 32' fill='none'><circle cx='16' cy='15.5' r='13.3' stroke='#2c66dd' stroke-width='2.2'/><path d='M12.8 12.5a3.3 3.3 0 1 1 4.6 3.1c-.9.4-1.4 1.1-1.4 2v.8' stroke='#2c66dd' stroke-width='2.1' stroke-linecap='round'/><circle cx='16' cy='21.8' r='1.2' fill='#2c66dd'/></svg>
<div class='a' style='left:10px;top:1451px;width:78px;height:78px;border-radius:50%;background:#857657'></div>
<div class='a' style='left:22px;top:1463px;width:54px;height:54px;border-radius:50%;background:#1b2356'></div>
<svg class='a' style='left:22px;top:1463px;' width='54' height='54' viewBox='0 0 54 54' fill='none'><path d='M21.5 20.5L40.5 40.5A1.9 1.9 0 0 1 37.8 43.2L18.8 23.2A1.9 1.9 0 0 1 21.5 20.5z' stroke='#fff' stroke-width='1.8' stroke-linecap='round' stroke-linejoin='round' stroke-width='1.7'/><path d='M20 25.5l3.3-3.3' stroke='#fff' stroke-width='1.8' stroke-linecap='round' stroke-linejoin='round' stroke-width='1.5'/><path d='M29.6 10.2Q30.88 14.72 35.4 16Q30.88 17.28 29.6 21.8Q28.32 17.28 23.8 16Q28.32 14.72 29.6 10.2zM16.2 11.2Q17.08 14.32 20.2 15.2Q17.08 16.08 16.2 19.2Q15.32 16.08 12.2 15.2Q15.32 14.32 16.2 11.2zM15.2 27.6Q16.08 30.72 19.2 31.6Q16.08 32.48 15.2 35.6Q14.32 32.48 11.2 31.6Q14.32 30.72 15.2 27.6zM12.3 22.2Q12.92 24.38 15.100000000000001 25Q12.92 25.62 12.3 27.8Q11.68 25.62 9.5 25Q11.68 24.38 12.3 22.2z' stroke='#fff' stroke-width='1.8' stroke-linecap='round' stroke-linejoin='round' stroke-width='1.4'/></svg>
<div class='a' style='left:22px;top:1537px;width:54px;height:54px;border-radius:50%;background:#3d4876'></div>
<svg class='a' style='left:22px;top:1537px;' width='54' height='54' viewBox='0 0 54 54' fill='none'><rect x='15.5' y='15.5' width='8.5' height='8.5' rx='1.5' stroke='#fff' stroke-width='2.5' stroke-linecap='round' stroke-linejoin='round'/><rect x='29.5' y='15.5' width='8.5' height='8.5' rx='1.5' stroke='#fff' stroke-width='2.5' stroke-linecap='round' stroke-linejoin='round'/><rect x='15.5' y='29.5' width='8.5' height='8.5' rx='1.5' stroke='#fff' stroke-width='2.5' stroke-linecap='round' stroke-linejoin='round'/><path d='M34 29v9.5M29.3 33.8H38.7' stroke='#fff' stroke-width='2.5' stroke-linecap='round' stroke-linejoin='round'/></svg>
<div class='a' style='left:0;top:0;width:2880px;height:1620px;will-change:transform'><div class='t' style='left:166.2px;top:22px;font-size:29.8px;line-height:30px;font-weight:bold;letter-spacing:0px;color:#7b6cd4'>C</div>
<div class='t' style='left:210.8px;top:22px;font-size:28.78px;line-height:29px;letter-spacing:-0.225px;color:#111b3c'>Catly</div>
<div class='t' style='left:566.0px;top:26px;font-size:23.26px;line-height:23px;letter-spacing:-0.097px;color:#9ba3bc'>Search for services or components</div>
<div class='t' style='left:1844.7px;top:25px;font-size:22.97px;line-height:23px;letter-spacing:-0.261px;color:#111b3c'>You're on Free Tier</div>
<div class='t' style='left:2082.0px;top:25px;font-size:22.97px;line-height:23px;font-weight:bold;letter-spacing:-0.667px;color:#2c66dd'>Upgrade</div>
<div class='t' style='left:2276.4px;top:24px;font-size:26.45px;line-height:26px;letter-spacing:0.305px;color:#2c66dd'>Deploy to Production</div>
<div class='t' style='left:1373.2px;top:27px;font-size:19.48px;line-height:19px;font-weight:bold;letter-spacing:0px;color:#9aa1b7'>K</div>
<div class='t' style='left:12.6px;top:126px;font-size:18.31px;line-height:18px;letter-spacing:0.243px;color:#6b78ad'>Services</div>
<div class='t' style='left:212.0px;top:124px;font-size:27.62px;line-height:28px;font-weight:bold;letter-spacing:1.8px;color:#2f6be0'>CLOUD SCALE</div>
<div class='t' style='left:148.5px;top:215px;font-size:17.3px;line-height:17px;letter-spacing:-0.367px;color:#8a93ae'>STORAGE</div>
<div class='t' style='left:148.4px;top:638px;font-size:17.3px;line-height:17px;letter-spacing:0.167px;color:#8a93ae'>SECURITY &amp; IDENTITY</div>
<div class='t' style='left:148.4px;top:856px;font-size:17.3px;line-height:17px;letter-spacing:-0.429px;color:#8a93ae'>TRIGGERS</div>
<div class='t' style='left:147.4px;top:1073px;font-size:17.3px;line-height:17px;letter-spacing:0.36px;color:#8a93ae'>NOTIFY</div>
<div class='t' style='left:147.6px;top:1291px;font-size:17.3px;line-height:17px;letter-spacing:0.358px;color:#8a93ae'>HOST &amp; MANAGE</div>
<div class='t' style='left:191.9px;top:273px;font-size:27.03px;line-height:27px;letter-spacing:-0.278px;color:#2c66dd'>Data Store</div>
<div class='t' style='left:191.8px;top:341px;font-size:27.03px;line-height:27px;letter-spacing:-0.356px;color:#111b3c'>File Store</div>
<div class='t' style='left:192.8px;top:409px;font-size:27.03px;line-height:27px;letter-spacing:-0.725px;color:#111b3c'>Cache</div>
<div class='t' style='left:192.8px;top:478px;font-size:27.03px;line-height:27px;letter-spacing:-0.56px;color:#111b3c'>Search</div>
<div class='t' style='left:192.8px;top:546px;font-size:27.03px;line-height:27px;letter-spacing:-0.417px;color:#111b3c'>Query Console</div>
<div class='t' style='left:193.4px;top:695px;font-size:27.03px;line-height:27px;letter-spacing:0.123px;color:#111b3c'>Authentication</div>
<div class='t' style='left:193.4px;top:764px;font-size:27.03px;line-height:27px;letter-spacing:-0.82px;color:#111b3c'>API Gateway</div>
<div class='t' style='left:192.8px;top:913px;font-size:27.03px;line-height:27px;letter-spacing:-0.633px;color:#111b3c'>Cron</div>
<div class='t' style='left:191.8px;top:982px;font-size:27.03px;line-height:27px;letter-spacing:-0.254px;color:#111b3c'>Event Listener</div>
<div class='t' style='left:191.8px;top:1131px;font-size:27.03px;line-height:27px;letter-spacing:0.133px;color:#111b3c'>Mail</div>
<div class='t' style='left:191.8px;top:1199px;font-size:27.03px;line-height:27px;letter-spacing:-0.018px;color:#111b3c'>Push Notifications</div>
<div class='t' style='left:193.8px;top:1349px;font-size:27.03px;line-height:27px;letter-spacing:-0.259px;color:#111b3c'>Web Client Hosting</div>
<div class='t' style='left:191.8px;top:1417px;font-size:27.03px;line-height:27px;letter-spacing:-0.271px;color:#111b3c'>Domain Mappings</div>
<div class='t' style='left:192.8px;top:1487px;font-size:25.14px;line-height:25px;letter-spacing:0.8px;color:#111b3c'>MDM</div>
<div class='t' style='left:373.7px;top:700px;font-size:17.17px;line-height:17px;letter-spacing:0.5px;color:#1fa84f'>NEW</div>
<div class='t' style='left:547.9px;top:121px;font-size:41.57px;line-height:42px;font-weight:bold;letter-spacing:-0.822px;color:#111b3c'>Data Store</div>
<div class='t' style='left:2767.5px;top:129px;font-size:26.6px;line-height:27px;letter-spacing:-0.1px;color:#2c66dd'>Help</div>
<div class='t' style='left:578.5px;top:273px;font-size:38.37px;line-height:38px;font-weight:bold;letter-spacing:-0.725px;color:#111b3c'>My Tables</div>
<div class='t' style='left:878.5px;top:279px;font-size:27.18px;line-height:27px;letter-spacing:-0.013px;color:#ffffff'>New Table</div>
<div class='t' style='left:630.1px;top:390px;font-size:27.03px;line-height:27px;letter-spacing:-0.371px;color:#74819e'>Search Table Names</div>
<div class='t' style='left:648.3px;top:491px;font-size:27.91px;line-height:28px;letter-spacing:-0.389px;color:#2d62d6'>UrlShorten</div>
<div class='t' style='left:1112.4px;top:257px;font-size:26.74px;line-height:27px;letter-spacing:-0.39px;color:#2c66dd'>Schema View</div>
<div class='t' style='left:1337.9px;top:257px;font-size:26.74px;line-height:27px;letter-spacing:-0.305px;color:#4b5877'>Scopes &amp; Permissions</div>
<div class='t' style='left:1664.0px;top:257px;font-size:26.74px;line-height:27px;letter-spacing:-0.175px;color:#4b5877'>Data View</div>
<div class='t' style='left:1109.1px;top:344px;font-size:30.52px;line-height:31px;font-weight:bold;letter-spacing:-0.656px;color:#111b3c'>UrlShorten</div>
<div class='t' style='left:1110.4px;top:396px;font-size:23.11px;line-height:23px;letter-spacing:-0.367px;color:#4b5877'>Table ID : 11831000000021102</div>
<div class='t' style='left:2207.5px;top:367px;font-size:27.62px;line-height:28px;letter-spacing:-0.861px;color:#74819e'>Search Column Names</div>
<div class='t' style='left:2646.2px;top:367px;font-size:27.62px;line-height:28px;letter-spacing:-0.622px;color:#2c66dd'>New Column</div>
<div class='t' style='left:1098.6px;top:485px;font-size:22.6px;line-height:23px;font-weight:bold;letter-spacing:-0.75px;color:#7685a6'>Column Id</div>
<div class='t' style='left:1427.1px;top:485px;font-size:22.6px;line-height:23px;font-weight:bold;letter-spacing:-0.75px;color:#7685a6'>Column Name</div>
<div class='t' style='left:1677.0px;top:485px;font-size:22.6px;line-height:23px;font-weight:bold;letter-spacing:-0.037px;color:#7685a6'>Data Type</div>
<div class='t' style='left:1847.9px;top:485px;font-size:22.6px;line-height:23px;font-weight:bold;letter-spacing:-0.283px;color:#7685a6'>Default value</div>
<div class='t' style='left:2052.8px;top:485px;font-size:22.6px;line-height:23px;font-weight:bold;letter-spacing:-0.415px;color:#7685a6'>Search Indexed</div>
<div class='t' style='left:2283.0px;top:485px;font-size:22.6px;line-height:23px;font-weight:bold;letter-spacing:-0.475px;color:#7685a6'>Is Unique</div>
<div class='t' style='left:2443.8px;top:485px;font-size:22.6px;line-height:23px;font-weight:bold;letter-spacing:-0.273px;color:#7685a6'>Is Mandatory</div>
<div class='t' style='left:2648.4px;top:485px;font-size:22.6px;line-height:23px;font-weight:bold;letter-spacing:-0.057px;color:#7685a6'>PII/ePHI</div>
<div class='t' style='left:1096.6px;top:560px;font-size:27.91px;line-height:28px;letter-spacing:-0.769px;color:#111b3c'>11831000000021105</div>
<div class='t' style='left:1425.1px;top:562px;font-size:25.95px;line-height:26px;letter-spacing:-1.325px;color:#111b3c'>ROWID</div>
<div class='t' style='left:1677.5px;top:560px;font-size:27.91px;line-height:28px;letter-spacing:-0.14px;color:#111b3c'>bigint</div>
<div class='t' style='left:2052.8px;top:560px;font-size:27.91px;line-height:28px;letter-spacing:-0.575px;color:#111b3c'>false</div>
<div class='t' style='left:2284.0px;top:560px;font-size:27.91px;line-height:28px;letter-spacing:-0.575px;color:#111b3c'>false</div>
<div class='t' style='left:2444.8px;top:560px;font-size:27.91px;line-height:28px;letter-spacing:-0.575px;color:#111b3c'>false</div>
<div class='t' style='left:2649.4px;top:560px;font-size:27.91px;line-height:28px;letter-spacing:-0.575px;color:#111b3c'>false</div>
<div class='t' style='left:1096.6px;top:634px;font-size:27.91px;line-height:28px;letter-spacing:-0.575px;color:#111b3c'>11831000000021107</div>
<div class='t' style='left:1426.1px;top:634px;font-size:25.95px;line-height:26px;letter-spacing:-1.35px;color:#111b3c'>CREATORID</div>
<div class='t' style='left:1677.5px;top:634px;font-size:27.91px;line-height:28px;letter-spacing:-0.14px;color:#111b3c'>bigint</div>
<div class='t' style='left:2052.8px;top:634px;font-size:27.91px;line-height:28px;letter-spacing:-0.067px;color:#111b3c'>true</div>
<div class='t' style='left:2284.0px;top:634px;font-size:27.91px;line-height:28px;letter-spacing:-0.575px;color:#111b3c'>false</div>
<div class='t' style='left:2444.8px;top:634px;font-size:27.91px;line-height:28px;letter-spacing:-0.575px;color:#111b3c'>false</div>
<div class='t' style='left:2649.4px;top:634px;font-size:27.91px;line-height:28px;letter-spacing:-0.575px;color:#111b3c'>false</div>
<div class='t' style='left:1096.6px;top:706px;font-size:27.91px;line-height:28px;letter-spacing:-0.712px;color:#111b3c'>11831000000021109</div>
<div class='t' style='left:1426.1px;top:707px;font-size:25.95px;line-height:26px;letter-spacing:-1.18px;color:#111b3c'>CREATEDTIME</div>
<div class='t' style='left:1677.5px;top:706px;font-size:27.91px;line-height:28px;letter-spacing:-0.129px;color:#111b3c'>datetime</div>
<div class='t' style='left:2052.8px;top:706px;font-size:27.91px;line-height:28px;letter-spacing:-0.067px;color:#111b3c'>true</div>
<div class='t' style='left:2284.0px;top:706px;font-size:27.91px;line-height:28px;letter-spacing:-0.575px;color:#111b3c'>false</div>
<div class='t' style='left:2444.8px;top:706px;font-size:27.91px;line-height:28px;letter-spacing:-0.575px;color:#111b3c'>false</div>
<div class='t' style='left:2649.4px;top:706px;font-size:27.91px;line-height:28px;letter-spacing:-0.575px;color:#111b3c'>false</div>
<div class='t' style='left:1096.6px;top:779px;font-size:27.91px;line-height:28px;letter-spacing:-0.962px;color:#111b3c'>11831000000021111</div>
<div class='t' style='left:1425.1px;top:780px;font-size:25.95px;line-height:26px;letter-spacing:-0.664px;color:#111b3c'>MODIFIEDTIME</div>
<div class='t' style='left:1677.5px;top:779px;font-size:27.91px;line-height:28px;letter-spacing:-0.129px;color:#111b3c'>datetime</div>
<div class='t' style='left:2052.8px;top:779px;font-size:27.91px;line-height:28px;letter-spacing:-0.067px;color:#111b3c'>true</div>
<div class='t' style='left:2284.0px;top:779px;font-size:27.91px;line-height:28px;letter-spacing:-0.575px;color:#111b3c'>false</div>
<div class='t' style='left:2444.8px;top:779px;font-size:27.91px;line-height:28px;letter-spacing:-0.575px;color:#111b3c'>false</div>
<div class='t' style='left:2649.4px;top:779px;font-size:27.91px;line-height:28px;letter-spacing:-0.575px;color:#111b3c'>false</div>
<div class='t' style='left:1096.6px;top:852px;font-size:27.91px;line-height:28px;letter-spacing:-0.712px;color:#111b3c'>11831000000021824</div>
<div class='t' style='left:1426.1px;top:852px;font-size:27.91px;line-height:28px;letter-spacing:-0.47px;color:#111b3c'>originalUrl</div>
<div class='t' style='left:1678.5px;top:852px;font-size:27.91px;line-height:28px;letter-spacing:-0.833px;color:#111b3c'>varchar</div>
<div class='t' style='left:2052.8px;top:852px;font-size:27.91px;line-height:28px;letter-spacing:-0.575px;color:#111b3c'>false</div>
<div class='t' style='left:2284.0px;top:852px;font-size:27.91px;line-height:28px;letter-spacing:-0.067px;color:#111b3c'>true</div>
<div class='t' style='left:2444.8px;top:852px;font-size:27.91px;line-height:28px;letter-spacing:-0.067px;color:#111b3c'>true</div>
<div class='t' style='left:2649.4px;top:852px;font-size:27.91px;line-height:28px;letter-spacing:-0.575px;color:#111b3c'>false</div></div>
</body></html>
